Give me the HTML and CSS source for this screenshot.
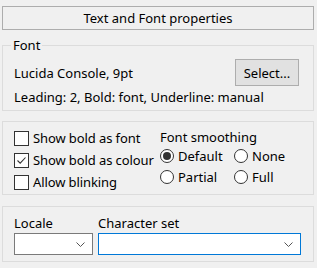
FILE: index.html
```html
<!DOCTYPE html>
<html>
<head>
  <title>Text and Font properties</title>
  <link rel="stylesheet" href="styles.css">
</head>
<body>
  <div class="panel">
    <div class="title">Text and Font properties</div>

    <fieldset class="group font-group">
      <legend>Font</legend>
      <div class="font-row">
        <span>Lucida Console, 9pt</span>
        <button class="btn">Select...</button>
      </div>
      <div class="font-info">Leading: 2, Bold: font, Underline: manual</div>
    </fieldset>

    <div class="group options">
      <div class="checks">
        <label class="check"><span class="box"></span>Show bold as font</label>
        <label class="check"><span class="box"><svg width="11" height="11" viewBox="0 0 11 11"><path d="M1.5 5.5 L4.2 8.2 L9.5 2.5" fill="none" stroke="#333" stroke-width="1.1"/></svg></span>Show bold as colour</label>
        <label class="check"><span class="box"></span>Allow blinking</label>
      </div>
      <div class="smoothing">
        <div class="sub-label">Font smoothing</div>
        <div class="radios">
          <label class="radio"><span class="dot on"></span>Default</label>
          <label class="radio"><span class="dot"></span>None</label>
          <label class="radio"><span class="dot"></span>Partial</label>
          <label class="radio"><span class="dot"></span>Full</label>
        </div>
      </div>
    </div>

    <div class="group charset">
      <div class="field locale">
        <div class="sub-label">Locale</div>
        <div class="combo"><svg class="chev" width="9" height="5" viewBox="0 0 9 5"><path d="M0.5 0.5 L4.5 4.5 L8.5 0.5" fill="none" stroke="#555" stroke-width="1"/></svg></div>
      </div>
      <div class="field cset">
        <div class="sub-label">Character set</div>
        <div class="combo active"><svg class="chev" width="9" height="5" viewBox="0 0 9 5"><path d="M0.5 0.5 L4.5 4.5 L8.5 0.5" fill="none" stroke="#555" stroke-width="1"/></svg></div>
      </div>
    </div>
  </div>
</body>
</html>
```

FILE: styles.css
```css
html, body {
  margin: 0;
  padding: 0;
  background: #f0f0f0;
  font-family: "Noto Sans", sans-serif;
  font-size: 13px;
  color: #000;
}

.panel {
  width: 312px;
  padding: 6px 0 0 2px;
}

.title {
  height: 22px;
  line-height: 22px;
  border: 1px solid #adadad;
  text-align: center;
}

.group {
  border: 1px solid #dcdcdc;
  margin: 0;
  box-sizing: border-box;
}

fieldset.group {
  margin-top: 7px;
  padding: 0 0 0 11px;
  height: 74px;
}

legend {
  padding: 0 2px;
  margin-left: -3px;
  line-height: 16px;
}

.font-row {
  display: flex;
  align-items: center;
  justify-content: space-between;
  padding-right: 14px;
  margin-top: 6px;
}

.btn {
  width: 64px;
  height: 27px;
  background: #e1e1e1;
  border: 1px solid #adadad;
  font: inherit;
  padding: 0;
  color: #000;
}

.font-info {
  margin-top: 2px;
  line-height: 18px;
}

.options {
  margin-top: 10px;
  height: 74px;
  display: flex;
  padding: 5px 0 0 11px;
}

.checks {
  width: 146px;
}

.check {
  display: flex;
  align-items: center;
  height: 22px;
  letter-spacing: -0.1px;
}

.box {
  width: 13px;
  height: 13px;
  border: 1px solid #333;
  background: #fff;
  margin-right: 4px;
  display: flex;
  align-items: center;
  justify-content: center;
}

.sub-label {
  line-height: 16px;
}

.smoothing {
  padding-top: 2px;
}

.radios {
  display: grid;
  grid-template-columns: 74px auto;
  grid-auto-rows: 21.5px;
}

.radio {
  display: flex;
  align-items: center;
}

.dot {
  width: 12px;
  height: 12px;
  border: 1px solid #333;
  border-radius: 50%;
  background: #fff;
  margin-right: 4px;
  position: relative;
}

.dot.on::after {
  content: "";
  position: absolute;
  left: 2px;
  top: 2px;
  width: 8px;
  height: 8px;
  border-radius: 50%;
  background: #333;
}

.charset {
  margin-top: 11px;
  height: 56px;
  display: flex;
  gap: 5px;
  padding: 8px 0 0 11px;
}

.locale .combo {
  width: 77px;
}

.cset .combo {
  width: 201px;
}

.combo {
  height: 20px;
  margin-top: 2px;
  border: 1px solid #7a7a7a;
  background: #fff;
  position: relative;
}

.combo.active {
  border-color: #0078d7;
}

.chev {
  position: absolute;
  right: 7px;
  top: 8px;
}
```
